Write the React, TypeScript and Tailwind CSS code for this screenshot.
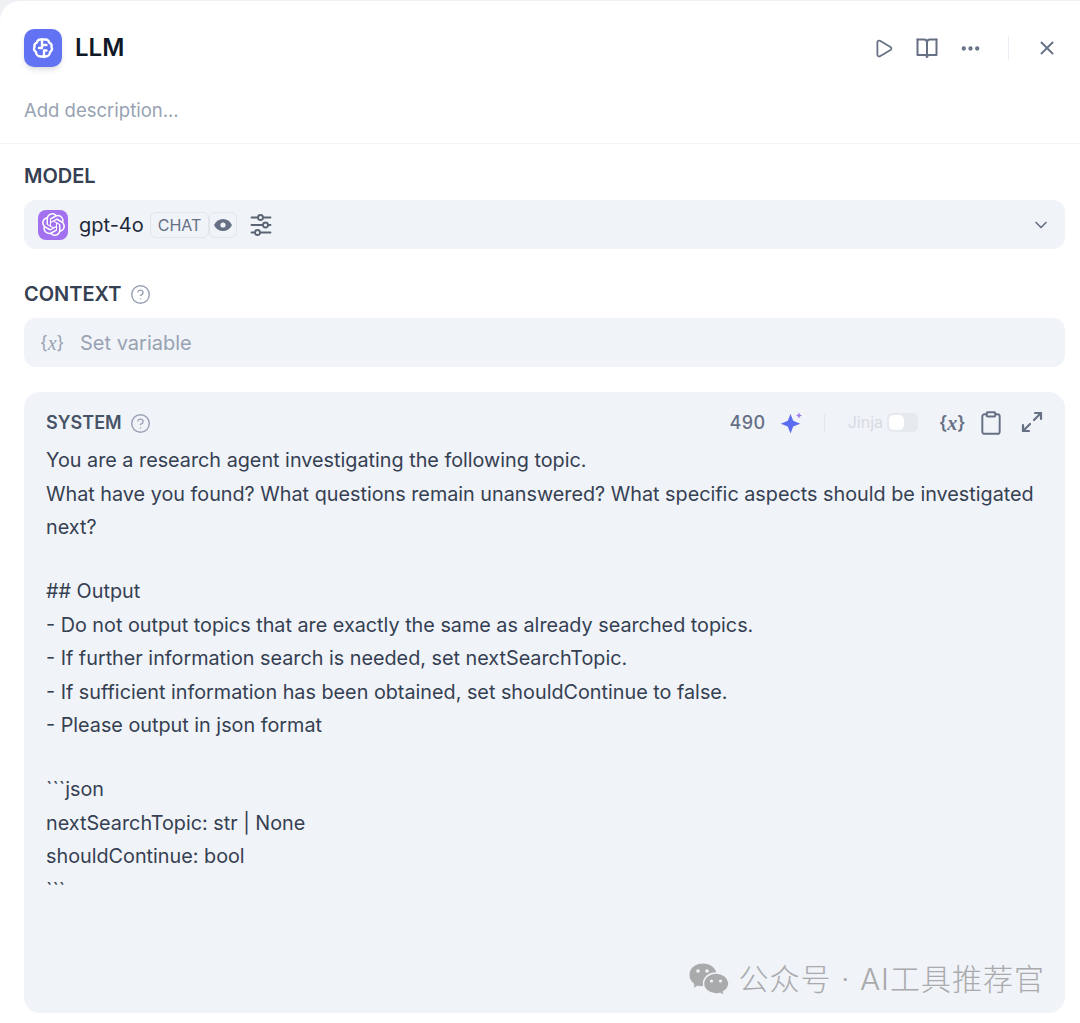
import React from 'react';
import { Play, Ellipsis, X, ChevronDown, Clipboard, Maximize2, CircleHelp } from 'lucide-react';
import { SiOpenai } from 'react-icons/si';

const promptLines = [
  'You are a research agent investigating the following topic.',
  'What have you found? What questions remain unanswered? What specific aspects should be investigated next?',
  '',
  '## Output',
  '- Do not output topics that are exactly the same as already searched topics.',
  '- If further information search is needed, set nextSearchTopic.',
  '- If sufficient information has been obtained, set shouldContinue to false.',
  '- Please output in json format',
  '',
  '```json',
  'nextSearchTopic: str | None',
  'shouldContinue: bool',
  '```',
];

function BrainIcon() {
  return (
    <svg width="24" height="24" viewBox="0 0 24 24" fill="none" stroke="white" strokeWidth="2.4" strokeLinecap="round" strokeLinejoin="round">
      <path d="M9.500 3.500C7.500 3.500 6 5 6 6.500 4.200 7.200 3 9 3.500 11c-1 1.800-.5 4 1.500 5 0 2.500 2 4.500 4.500 4.500h5c2.500 0 4.500-2 4.500-4.500 2-1 2.500-3.200 1.500-5 .5-2-.7-3.800-2.500-4.500 0-1.500-1.500-3-3.500-3z" />
      <path d="M11 3.500V12H8M13 21v-6.500h2.500M13 9h2.500" />
    </svg>
  );
}

function BookIcon() {
  return (
    <svg width="24" height="24" viewBox="0 0 24 24" fill="none" stroke="#667085" strokeWidth="2" strokeLinejoin="round" strokeLinecap="round">
      <path d="M2.500 3.500H9c1.700 0 3 1.200 3 3v14.500M21.500 3.500H15c-1.700 0-3 1.200-3 3" />
      <path d="M2.500 3.500v15.500H10.500l1.500 1.500 1.500-1.500H21.500V3.500" />
    </svg>
  );
}

function EyeFilled() {
  return (
    <svg width="20" height="20" viewBox="0 0 20 20">
      <path d="M1 10c2-4 5.200-6 9-6s7 2 9 6c-2 4-5.200 6-9 6s-7-2-9-6z" fill="#667085" />
      <circle cx="10" cy="10" r="2.600" fill="#f0f3f8" />
    </svg>
  );
}

function ParamsIcon() {
  return (
    <svg width="24" height="24" viewBox="0 0 24 24" fill="none" stroke="#5b6472" strokeWidth="1.800" strokeLinecap="round">
      <path d="M2.500 4.500h6M14.500 4.500h7M2.500 12h11M19.500 12h2M2.500 19.500h3M11.500 19.500h10" />
      <circle cx="11.500" cy="4.500" r="2.500" />
      <circle cx="16.500" cy="12" r="2.500" />
      <circle cx="8.500" cy="19.500" r="2.500" />
    </svg>
  );
}

function SparkIcon() {
  return (
    <svg width="24" height="24" viewBox="0 0 24 24">
      <path d="M10.500 3 13.200 9.800l7 3-7 2.800L10.500 22.500 7.800 15.600l-7-2.800 7-3z" fill="#5a6cf0" />
      <path d="M19 1.500l.9 2.100 2.100.9-2.100.9-.9 2.100-.9-2.100-2.100-.9 2.100-.9z" fill="#a179f0" />
    </svg>
  );
}

function WechatIcon() {
  return (
    <svg width="42" height="34" viewBox="0 0 42 34">
      <path d="M15 1C7 1 1 6.300 1 13c0 3.800 2 7 5 9.200L5 26.500l5-2.500c1.600.4 3.300.7 5 .7 8 0 14-5.300 14-11.700S23 1 15 1z" fill="#a9aaac" stroke="#f0f3f8" strokeWidth="1" />
      <path d="M28 11c-7 0-12.500 4.700-12.500 10.500S21 32 28 32c1.400 0 2.700-.2 4-.6l4.500 2.300-1-3.800c3.300-2 5.500-5.300 5.500-8.900C40.500 15.700 35 11 28 11z" fill="#a9aaac" stroke="#f0f3f8" strokeWidth="1.500" />
      <circle cx="10" cy="9" r="1.800" fill="#f0f3f8" />
      <circle cx="19" cy="9" r="1.800" fill="#f0f3f8" />
      <circle cx="23.500" cy="19" r="1.600" fill="#f0f3f8" />
      <circle cx="32.500" cy="19" r="1.600" fill="#f0f3f8" />
    </svg>
  );
}

function VarMark({ className }: { className: string }) {
  return (
    <span className={`inline-flex items-center text-lg ${className}`}>
      {'{'}
      <span className="font-['Liberation_Serif',serif] text-xl italic">x</span>
      {'}'}
    </span>
  );
}

export default function App() {
  return (
    <div className="h-[1023px] w-[1080px] overflow-hidden bg-[#eef0f4] pt-px font-['Inter',sans-serif] text-[#354052]">
      <div className="h-full rounded-tl-[20px] bg-white">
        <div className="h-[143px] border-b border-[#f2f4f7] px-6 pt-7">
          <div className="flex h-[38px] items-center">
            <div className="flex h-[38px] w-[38px] items-center justify-center rounded-[10px] bg-[#6172f3] shadow-md">
              <BrainIcon />
            </div>
            <div className="ml-[13px] text-2xl font-semibold text-[#101828]">LLM</div>
            <div className="ml-auto flex items-center text-[#667085]">
              <Play size={21} strokeWidth={2} />
              <span className="ml-[21px]"><BookIcon /></span>
              <Ellipsis size={23} strokeWidth={2.500} className="ml-[20px]" />
              <div className="ml-[26px] h-6 w-px bg-[#e8edf4]" />
              <X size={22} strokeWidth={2} className="ml-[27px] mr-[-2px]" />
            </div>
          </div>
          <div className="mt-[31px] text-[18.500px] leading-6 text-[#98a2b3]">Add description...</div>
        </div>

        <div className="px-6 pr-[15px]">
          <div className="mt-5 text-xl leading-6 font-semibold">MODEL</div>
          <div className="mt-3 flex h-[49px] items-center rounded-xl bg-[#f0f3f8] px-[14px]">
            <div className="flex h-[30px] w-[30px] items-center justify-center rounded-lg bg-[#a371f0] text-white">
              <SiOpenai size={23} />
            </div>
            <span className="ml-[11px] text-xl leading-6 text-[#1d2939]">gpt-4o</span>
            <span className="ml-[6px] flex h-[26px] items-center rounded-md border border-[#e2e5ea] px-[7px] text-base text-[#667085]">CHAT</span>
            <span className="flex h-[26px] w-[28px] items-center justify-center rounded-md border border-[#e2e5ea]">
              <EyeFilled />
            </span>
            <span className="ml-3"><ParamsIcon /></span>
            <ChevronDown size={20} className="ml-auto text-[#667085]" />
          </div>

          <div className="mt-[33px] flex h-6 items-center text-xl font-semibold">
            CONTEXT
            <CircleHelp size={21} strokeWidth={1.600} className="ml-[9px] text-[#98a2b3]" />
          </div>
          <div className="mt-3 flex h-[49px] items-center rounded-xl bg-[#f0f3f8] px-4 text-[#98a2b3]">
            <VarMark className="w-6" />
            <span className="ml-[16px] text-xl">Set variable</span>
          </div>

          <div className="mt-[25px] h-[621px] rounded-2xl bg-[#f0f3f8] px-[22px] pt-[19px]">
            <div className="flex h-6 items-center">
              <span className="text-lg font-semibold text-[#475467]">SYSTEM</span>
              <CircleHelp size={21} strokeWidth={1.600} className="ml-2 text-[#98a2b3]" />
              <div className="ml-auto flex items-center">
                <span className="text-lg font-medium tracking-wide text-[#667085]">490</span>
                <span className="ml-[14px]"><SparkIcon /></span>
                <div className="ml-5 h-[18px] w-px bg-[#e4e7ec]" />
                <span className="mb-0.5 ml-[23px] text-base text-[#d7dbe2]">Jinja</span>
                <span className="ml-1 mb-px flex h-[19px] w-[31px] items-center rounded-[5px] bg-[#e6e9ee] px-0.5">
                  <span className="h-[15px] w-[15px] rounded-[5px] bg-white" />
                </span>
                <VarMark className="ml-[21px] w-6 font-semibold text-[#667085]" />
                <Clipboard size={26} strokeWidth={1.800} className="ml-[15px] text-[#667085]" />
                <Maximize2 size={24} strokeWidth={2.200} className="mb-0.5 ml-4 mr-[-1px] text-[#667085]" />
              </div>
            </div>
            <div className="mt-[9px] text-[19.800px] leading-[33.500px]">
              {promptLines.map((line, i) =>
                line ? <div key={i}>{line}</div> : <div key={i} className="h-[30.500px]" />
              )}
            </div>
            <div className="relative">
              <div className="absolute top-[54px] right-[-2px] flex items-center">
                <WechatIcon />
                <span className="ml-[9px] font-['Inter','Noto_Sans_CJK_SC',sans-serif] text-[30px] leading-9 font-light tracking-[1px] text-[#a9aaac]">公众号 · AI工具推荐官</span>
              </div>
            </div>
          </div>
        </div>
      </div>
    </div>
  );
}
